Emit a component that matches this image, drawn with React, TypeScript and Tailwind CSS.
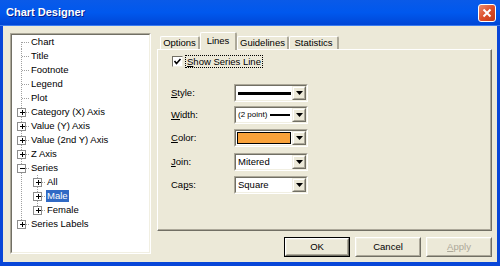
import React from "react";

type Node = {
  label: string;
  level?: number;
  exp?: "+" | "-";
  first?: boolean;
  last?: boolean;
  selected?: boolean;
};

const nodes: Node[] = [
  { label: "Chart", first: true },
  { label: "Title" },
  { label: "Footnote" },
  { label: "Legend" },
  { label: "Plot" },
  { label: "Category (X) Axis", exp: "+" },
  { label: "Value (Y) Axis", exp: "+" },
  { label: "Value (2nd Y) Axis", exp: "+" },
  { label: "Z Axis", exp: "+" },
  { label: "Series", exp: "-" },
  { label: "All", level: 1, exp: "+" },
  { label: "Male", level: 1, exp: "+", selected: true },
  { label: "Female", level: 1, exp: "+", last: true },
  { label: "Series Labels", exp: "+", last: true },
];

function Expander({ cx, sign }: { cx: number; sign: "+" | "-" }) {
  return (
    <g shapeRendering="crispEdges">
      <rect x={cx - 4} y={3.5} width={8} height={8} fill="#fff" stroke="#8d8d8d" />
      <line x1={cx - 2} y1={7.5} x2={cx + 3} y2={7.5} stroke="#000" />
      {sign === "+" && <line x1={cx + 0.5} y1={5} x2={cx + 0.5} y2={10} stroke="#000" />}
    </g>
  );
}

function TreeRow({ n }: { n: Node }) {
  const lvl = n.level ?? 0;
  const w = lvl === 0 ? 18 : 34;
  const root = 9.5;
  const child = 25.5;
  return (
    <div className="flex h-[14px] items-center">
      <svg width={w} height={14} className="shrink-0">
        <g stroke="#a0a0a0" strokeDasharray="1 1" shapeRendering="crispEdges">
          {lvl === 0 ? (
            <>
              <line x1={root} y1={n.first ? 7 : 0} x2={root} y2={n.last ? 8 : 14} />
              <line x1={root} y1={7.5} x2={w} y2={7.5} />
            </>
          ) : (
            <>
              <line x1={root} y1={0} x2={root} y2={14} />
              <line x1={child} y1={0} x2={child} y2={n.last ? 8 : 14} />
              <line x1={child} y1={7.5} x2={w} y2={7.5} />
            </>
          )}
        </g>
        {n.exp && <Expander cx={lvl === 0 ? root : child} sign={n.exp} />}
      </svg>
      <span
        className={
          n.selected
            ? "px-[1px] h-[12px] leading-[12px] bg-[#316ac5] text-white"
            : "px-[1px] h-[12px] leading-[12px] text-black"
        }
      >
        {n.label}
      </span>
    </div>
  );
}

function Sunken({ children, className = "" }: { children: React.ReactNode; className?: string }) {
  return (
    <div className={`border border-t-[#aca899] border-l-[#aca899] border-b-white border-r-white ${className}`}>
      <div className="h-full w-full border border-t-[#716f64] border-l-[#716f64] border-b-[#f1efe2] border-r-[#f1efe2] bg-white">
        {children}
      </div>
    </div>
  );
}

function DropButton() {
  return (
    <div className="h-full w-[14px] shrink-0 border border-t-[#f1efe2] border-l-[#f1efe2] border-b-[#716f64] border-r-[#716f64]">
      <div className="h-full w-full flex items-center justify-center bg-[#ece9d8] border border-t-white border-l-white border-b-[#aca899] border-r-[#aca899]">
        <svg width="7" height="4">
          <path d="M0 0 H7 L3.5 4 Z" fill="#000" />
        </svg>
      </div>
    </div>
  );
}

function Combo({ children }: { children: React.ReactNode }) {
  return (
    <Sunken className="w-[74px] h-[18px]">
      <div className="flex h-full">
        <div className="flex flex-1 items-center min-w-0">{children}</div>
        <DropButton />
      </div>
    </Sunken>
  );
}

function Row({ label, u, rest, mt, children }: { label?: string; u: string; rest: string; mt: string; children: React.ReactNode }) {
  return (
    <div className={`flex items-center h-[18px] ${mt}`}>
      <div className="w-[63px] text-black">
        {label}
        <u>{u}</u>
        {rest}
      </div>
      <Combo>{children}</Combo>
    </div>
  );
}

function Tab({ label, active, w }: { label: string; active?: boolean; w: string }) {
  return (
    <div
      className={
        active
          ? `${w} h-[18px] mb-[-1px] relative z-10 flex items-center justify-center bg-[#ece9d8] border-t border-l border-white border-r-2 border-r-[#aca899] rounded-t-[2px]`
          : `${w} h-[13px] flex items-center justify-center bg-[#ece9d8] border-t border-l border-white border-r-2 border-r-[#aca899] rounded-t-[2px]`
      }
    >
      {label}
    </div>
  );
}

function Btn({ children, def, disabled }: { children: React.ReactNode; def?: boolean; disabled?: boolean }) {
  return (
    <div className={def ? "w-[66px] h-[20px] border border-black" : "w-[66px] h-[20px]"}>
      <div className="h-full w-full border border-t-white border-l-white border-b-[#716f64] border-r-[#716f64]">
        <div
          className={`h-full w-full flex items-center justify-center border border-t-[#f1efe2] border-l-[#f1efe2] border-b-[#aca899] border-r-[#aca899] ${
            disabled ? "text-[#aca899]" : "text-black"
          }`}
        >
          {children}
        </div>
      </div>
    </div>
  );
}

export default function App() {
  return (
    <div
      className="w-[500px] h-[266px] flex flex-col bg-[#0846d8] overflow-hidden text-[9.5px]"
      style={{ fontFamily: '"Liberation Sans", Arial, sans-serif' }}
    >
      {/* Title bar */}
      <div className="h-[26px] shrink-0 flex items-center justify-between pl-[6px] pr-[4px] bg-gradient-to-b from-[#0a5ae8] via-[#0058ee] to-[#0046d6] border-b border-b-[#3b7cf0]">
        <span className="text-white font-bold text-[11px] [text-shadow:1px_1px_0_#0a1e8c]">Chart Designer</span>
        <div className="w-[18px] h-[18px] rounded-[3px] border border-white bg-gradient-to-br from-[#ea8a6c] via-[#dc4f2a] to-[#c43a16] flex items-center justify-center">
          <svg width="10" height="10">
            <path d="M1.5 1.5 L8.5 8.5 M8.5 1.5 L1.5 8.5" stroke="#fff" strokeWidth="2" />
          </svg>
        </div>
      </div>

      {/* Body */}
      <div className="flex-1 mx-[3px] mb-[4px] bg-[#ece9d8] flex">
        {/* Tree */}
        <Sunken className="w-[141px] h-[221px] mt-[7px] ml-[7px]">
          <div className="flex flex-col">
            {nodes.map((n) => (
              <TreeRow key={n.label} n={n} />
            ))}
          </div>
        </Sunken>

        {/* Right side */}
        <div className="w-[335px] ml-[6px] mt-[6px] flex flex-col">
          <div className="h-[17px] flex items-end pl-[3px] text-black">
            <Tab label="Options" w="w-[40px]" />
            <Tab label="Lines" w="w-[37px]" active />
            <Tab label="Guidelines" w="w-[52px]" />
            <Tab label="Statistics" w="w-[50px]" />
          </div>

          <div className="h-[182px] border-t border-l border-white border-r border-b border-r-[#716f64] border-b-[#716f64]">
            <div className="h-full w-full border-r border-b border-r-[#aca899] border-b-[#aca899] pt-[6px] pl-[13px]">
              <div className="flex items-center h-[11px]">
                <div className="w-[11px] h-[11px] ml-[1px] border border-t-[#716f64] border-l-[#716f64] border-b-[#f1efe2] border-r-[#f1efe2] bg-white flex items-center justify-center">
                  <svg width="9" height="9">
                    <path d="M1.5 4 L3.5 6.5 L7.5 2" stroke="#000" strokeWidth="1.6" fill="none" />
                  </svg>
                </div>
                <span className="ml-[2px] px-[1px] h-[13px] leading-[11px] border border-dotted border-black text-black">
                  <u>S</u>how Series Line
                </span>
              </div>

              <Row u="S" rest="tyle:" mt="mt-[17px]">
                <div className="flex-1 h-[3px] bg-black ml-[2px] mr-[1px]" />
              </Row>
              <Row u="W" rest="idth:" mt="mt-[4px]">
                <span className="ml-[2px] text-[8px] text-black whitespace-nowrap">(2 point)</span>
                <div className="flex-1 h-[1.5px] bg-black ml-[3px] mr-[2px]" />
              </Row>
              <Row u="C" rest="olor:" mt="mt-[5px]">
                <div className="flex-1 h-[12px] bg-[#f9a23a] border border-black ml-[1px] mr-[1px]" />
              </Row>
              <Row u="J" rest="oin:" mt="mt-[6px]">
                <span className="ml-[2px] text-black">Mitered</span>
              </Row>
              <Row label="Ca" u="p" rest="s:" mt="mt-[5px]">
                <span className="ml-[2px] text-black">Square</span>
              </Row>
            </div>
          </div>

          <div className="mt-[6px] flex justify-end gap-[5px]">
            <Btn def>OK</Btn>
            <Btn>Cancel</Btn>
            <Btn disabled>
              <u>A</u>pply
            </Btn>
          </div>
        </div>
      </div>
    </div>
  );
}
